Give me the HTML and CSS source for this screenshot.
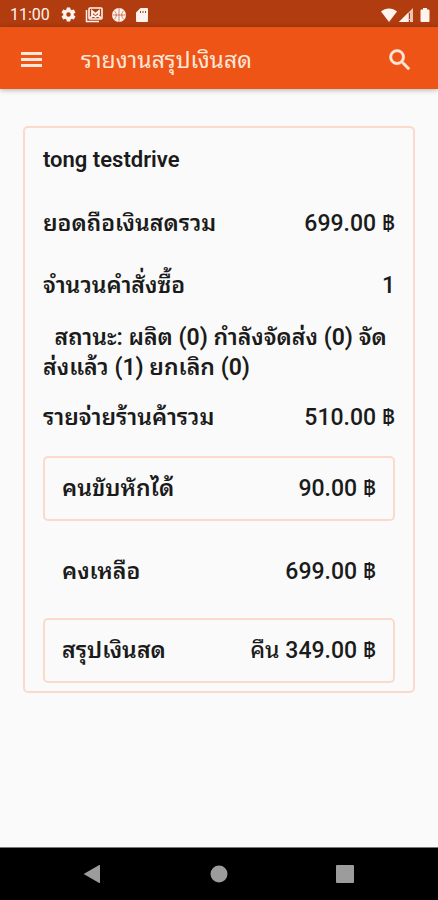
FILE: index.html
```html
<!DOCTYPE html>
<html lang="th">
<head>
<meta charset="utf-8">
<meta name="viewport" content="width=device-width, initial-scale=1">
<title>รายงานสรุปเงินสด</title>
<link rel="stylesheet" href="styles.css">
</head>
<body>
<div class="status-bar">
  <time class="clock">11:00</time>
  <div class="notices">
    <svg width="17" height="17" viewBox="0 0 24 24"><path fill="currentColor" fill-rule="evenodd" d="M19.4 13a7.8 7.8 0 0 0 0-2l2.2-1.6c.2-.2.2-.4.1-.6l-2-3.500c-.1-.2-.4-.3-.6-.2l-2.500 1a7.700 7.700 0 0 0-1.700-1L14.500 2.400a.5.5 0 0 0-.5-.4h-4a.5.5 0 0 0-.5.400L9.100 5.100a7.700 7.700 0 0 0-1.700 1l-2.500-1c-.2-.1-.5 0-.6.2l-2 3.500c-.1.2 0 .4.100.6L4.600 11a7.800 7.800 0 0 0 0 2l-2.200 1.600c-.1.2-.2.4-.1.600l2 3.500c.1.2.4.3.6.2l2.500-1c.5.400 1.100.7 1.700 1l.4 2.700c0 .2.2.4.5.4h4c.3 0 .5-.2.5-.4l.4-2.700c.6-.3 1.200-.6 1.700-1l2.500 1c.2.1.5 0 .6-.2l2-3.500c.1-.2 0-.4-.1-.6zM12 15.200a3.200 3.200 0 1 1 0-6.400 3.200 3.200 0 0 1 0 6.400z"/></svg>
    <svg width="18" height="17" viewBox="0 0 18 17"><path fill="none" stroke="currentColor" stroke-width="1.500" d="M1.500 4v11.500H14"/><rect x="4" y="2" width="13" height="11" rx="1" fill="none" stroke="currentColor" stroke-width="1.600"/><path fill="none" stroke="currentColor" stroke-width="1.800" d="M7 10V5l3.500 3L14 5v4M5 12l3-2.500 2.500 1.500L13 9.500l3 2.500"/></svg>
    <svg width="16" height="16" viewBox="0 0 16 16"><circle cx="8" cy="8" r="7" fill="currentColor"/><path class="cut" d="M8 1v14M1.500 8h13M3 3.500c3 2.500 3 6.500 0 9M13 3.500c-3 2.500-3 6.500 0 9"/></svg>
    <svg width="14" height="16" viewBox="0 0 14 16"><path fill="currentColor" fill-rule="evenodd" d="M5.500 1H12a1 1 0 0 1 1 1v12a1 1 0 0 1-1 1H2a1 1 0 0 1-1-1V5.500zM5 4v2h1V4zm2.500 0v2h1V4zM10 4v2h1V4z"/></svg>
  </div>
  <div class="signals">
    <svg width="18" height="16" viewBox="0 0 18 16"><path fill="currentColor" d="M1 4.500C5.500.500 12.500.500 17 4.500L9 15z"/></svg>
    <svg width="16" height="16" viewBox="0 0 16 16"><path fill="currentColor" opacity=".75" d="M1 15 15 1v14z"/><path fill="currentColor" d="M1 15 10 6v9z"/><path class="alert" d="M11 6h1v6h-1zM11 13h1v2h-1z"/></svg>
    <svg class="battery" width="10" height="16" viewBox="0 0 10 16"><path fill="currentColor" d="M3 1h4v1.500h1.500A1 1 0 0 1 9.500 3.500V14a1 1 0 0 1-1 1h-7a1 1 0 0 1-1-1V3.500a1 1 0 0 1 1-1H3z"/></svg>
  </div>
</div>
<header class="app-bar">
  <button class="icon-button" type="button" aria-label="เมนู">
    <svg width="22" height="16" viewBox="0 0 22 16"><path fill="currentColor" d="M1 0h21v3H1zM1 6h21v3H1zM1 12h21v3H1z"/></svg>
  </button>
  <h1 class="title">รายงานสรุปเงินสด</h1>
  <button class="icon-button" type="button" aria-label="ค้นหา">
    <svg width="28" height="28" viewBox="0 0 24 24"><path fill="currentColor" stroke="currentColor" stroke-width=".5" d="M15.500 14h-.79l-.28-.27A6.470 6.470 0 0 0 16 9.500 6.500 6.500 0 1 0 9.500 16c1.610 0 3.090-.59 4.230-1.570l.27.28v.79l5 4.990L20.490 19zm-6 0a4.500 4.500 0 1 1 0-9 4.500 4.500 0 0 1 0 9z"/></svg>
  </button>
</header>
<main class="content">
  <section class="card">
    <h2 class="name">tong testdrive</h2>
    <div class="row first"><span class="label">ยอดถือเงินสดรวม</span><span>699.00 ฿</span></div>
    <div class="row"><span class="label">จำนวนคำสั่งซื้อ</span><span>1</span></div>
    <p class="states">&nbsp; สถานะ: ผลิต (0) กำลังจัดส่ง (0) จัด<br>ส่งแล้ว (1) ยกเลิก (0)</p>
    <div class="row"><span class="label">รายจ่ายร้านค้ารวม</span><span>510.00 ฿</span></div>
    <div class="row box"><span class="label">คนขับหักได้</span><span>90.00 ฿</span></div>
    <div class="row box plain"><span class="label">คงเหลือ</span><span>699.00 ฿</span></div>
    <div class="row box"><span class="label">สรุปเงินสด</span><span>คืน 349.00 ฿</span></div>
  </section>
</main>
<nav class="nav-bar">
  <button class="nav-button" type="button" aria-label="ย้อนกลับ"><svg width="20" height="20" viewBox="0 0 20 20"><path fill="currentColor" d="M17 1.500v17a.5.5 0 0 1-.8.400L1.500 10.500a.5.5 0 0 1 0-1L16.200 1.100a.5.5 0 0 1 .8.400z"/></svg></button>
  <button class="nav-button" type="button" aria-label="หน้าหลัก"><svg width="20" height="20" viewBox="0 0 20 20"><circle cx="10" cy="10" r="8.500" fill="currentColor"/></svg></button>
  <button class="nav-button" type="button" aria-label="ล่าสุด"><svg width="20" height="20" viewBox="0 0 20 20"><rect x="1" y="1" width="18" height="18" rx="1" fill="currentColor"/></svg></button>
</nav>
</body>
</html>
```
FILE: styles.css
```css
* { box-sizing: border-box; }

body {
  margin: 0;
  min-height: 100vh;
  display: flex;
  flex-direction: column;
  background: #fafafa;
  color: #1b1b1b;
  font-family: Roboto, "Noto Sans Thai Looped", "Noto Looped Thai", Loma, Waree, Garuda, Umpush, "Noto Sans Thai", sans-serif;
  font-size: 23px;
  font-weight: 500;
  line-height: 30px;
}

svg { display: block; }

button {
  border: 0;
  padding: 0;
  background: none;
  color: inherit;
}

.status-bar {
  display: flex;
  align-items: center;
  height: 27px;
  padding: 2px 8px 0 10px;
  background: #b03c10;
  color: #fff3ee;
}

.clock {
  font-size: 16px;
  font-weight: 400;
  line-height: 20px;
}

.notices {
  display: flex;
  align-items: center;
  gap: 8px;
  margin-left: 10px;
}

.cut {
  fill: none;
  stroke: #b03c10;
  stroke-width: 1;
  opacity: 0.6;
}

.alert { fill: #b03c10; }

.signals {
  display: flex;
  margin-left: auto;
}

.battery { margin-left: 6px; }

.app-bar {
  display: flex;
  align-items: center;
  height: 62px;
  padding: 4px 24px 0 20px;
  background: #ee5415;
  color: #ffe6da;
  box-shadow: 0 1px 5px rgba(0, 0, 0, 0.3);
}

.title {
  flex: 1;
  margin: 2px 0 0 39px;
  font-size: 23px;
  font-weight: 400;
  line-height: 30px;
}

.content {
  flex: 1;
  padding: 37px 23px;
}

.card {
  padding: 17px 18px 8px;
  border: 2px solid #fbd9cb;
  border-radius: 5px;
}

.name {
  margin: 0;
  font-size: 22px;
  font-weight: 600;
  line-height: 30px;
}

.row {
  display: flex;
  justify-content: space-between;
  margin-top: 32px;
}

.first { margin-top: 34px; }

.label,
.states { font-weight: 600; }

.states {
  margin: 22px 0 0;
}

.states + .row { margin-top: 20px; }

.box {
  margin-top: 23px;
  padding: 16px 17px 15px;
  border: 2px solid #fbd9cb;
  border-radius: 5px;
}

.plain {
  margin: 18px 0 14px;
  border-color: transparent;
}

.plain + .box { margin-top: 0; }

.nav-bar {
  display: flex;
  justify-content: center;
  gap: 106px;
  height: 53px;
  border-top: 1px solid #777;
  background: #000;
  color: #9c9c9c;
}

.nav-button {
  display: flex;
  align-items: center;
}
```
